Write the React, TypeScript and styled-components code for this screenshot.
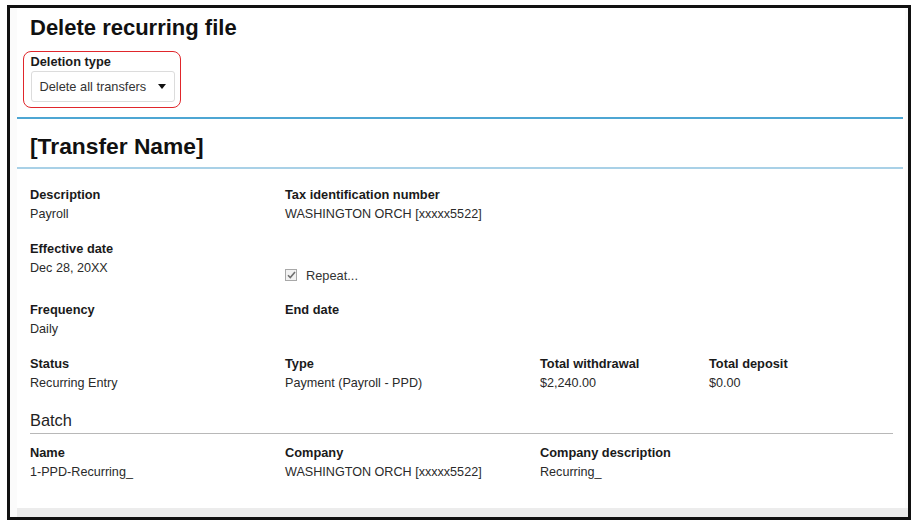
import React from 'react';
import styled, { createGlobalStyle } from 'styled-components';

const GlobalStyle = createGlobalStyle`
  html, body {
    margin: 0;
    padding: 0;
    background: #ffffff;
  }
  body {
    font-family: "Liberation Sans", Arial, sans-serif;
    color: #222222;
  }
`;

const Frame = styled.div`
  box-sizing: border-box;
  width: 904px;
  height: 515px;
  margin: 5px 0 0 7px;
  border: 3px solid #111111;
  background: #fbfbfb;
  display: flex;
  flex-direction: column;
`;

const Panel = styled.div`
  flex: 1;
  margin: 0 3px 0 7px;
  background: #ffffff;
  display: flex;
  flex-direction: column;
`;

const Footer = styled.div`
  height: 9px;
  margin-left: 7px;
  background: #ececec;
`;

const Header = styled.div`
  padding: 7px 0 9px 13px;
`;

const Title = styled.h1<{ $size?: number }>`
  margin: 0;
  font-size: ${(p) => p.$size ?? 22}px;
  line-height: 26px;
  font-weight: 700;
  color: #111111;
`;

const Highlight = styled.div`
  box-sizing: border-box;
  width: 158px;
  margin: 10px 0 0 -7px;
  padding: 1.5px 5px 5px 6.5px;
  border: 1.5px solid #e0262b;
  border-radius: 8px;
`;

const FieldLabel = styled.div`
  font-size: 12.8px;
  line-height: 15px;
  font-weight: 700;
  color: #1a1a1a;
`;

const SelectBox = styled.div`
  box-sizing: border-box;
  width: 144px;
  height: 31px;
  margin-top: 2.5px;
  padding: 0 8px;
  border: 1px solid #dcdcdc;
  border-radius: 3px;
  background: #ffffff;
  display: flex;
  align-items: center;
  justify-content: space-between;
  font-size: 12.8px;
  color: #333333;
`;

const Caret = styled.span`
  width: 0;
  height: 0;
  border-left: 4px solid transparent;
  border-right: 4px solid transparent;
  border-top: 5px solid #111111;
`;

const Rule = styled.div<{ $color: string; $weight: number }>`
  height: ${(p) => p.$weight}px;
  margin-right: 2px;
  background: ${(p) => p.$color};
`;

const NameHeader = styled.div`
  box-sizing: border-box;
  height: 48px;
  padding: 7px 0 0 13px;
  display: flex;
  align-items: center;
`;

const Details = styled.div`
  padding: 18px 12px 0 13px;
`;

const Grid = styled.div`
  display: grid;
  grid-template-columns: 255px 255px 169px 1fr;
  row-gap: 19px;
`;

const Field = styled.div`
  display: flex;
  flex-direction: column;
  gap: 5px;
`;

const Value = styled.div`
  font-size: 12.6px;
  line-height: 15px;
  color: #2a2a2a;
`;

const Spacer = styled.div`
  height: 15px;
`;

const CheckRow = styled.div`
  display: flex;
  align-items: center;
  gap: 9px;
  margin-top: 7px;
  font-size: 12.8px;
  line-height: 15px;
  color: #333333;
`;

const CheckBox = styled.span`
  box-sizing: border-box;
  width: 12px;
  height: 12px;
  border: 1px solid #a8a8a8;
  background: #f2f2f2;
  display: inline-flex;
  align-items: center;
  justify-content: center;
`;

const SectionTitle = styled.div`
  margin-top: 19px;
  padding-bottom: 3px;
  border-bottom: 1px solid #b8b8b8;
  font-size: 16.4px;
  line-height: 20px;
  color: #222222;
`;

const BatchGrid = styled(Grid)`
  margin-top: 11px;
`;

type Item = { label: string; value?: string };

const FieldCell: React.FC<Item> = ({ label, value }) => (
  <Field>
    <FieldLabel>{label}</FieldLabel>
    {value !== undefined && <Value>{value}</Value>}
  </Field>
);

export default function App() {
  return (
    <>
      <GlobalStyle />
      <Frame>
        <Panel>
          <Header>
            <Title>Delete recurring file</Title>
            <Highlight>
              <FieldLabel>Deletion type</FieldLabel>
              <SelectBox>
                <span>Delete all transfers</span>
                <Caret />
              </SelectBox>
            </Highlight>
          </Header>
          <Rule $color="#4ea6d3" $weight={1.5} />
          <NameHeader>
            <Title $size={22.8}>[Transfer Name]</Title>
          </NameHeader>
          <Rule $color="#a9d1e7" $weight={2} />
          <Details>
            <Grid>
              <FieldCell label="Description" value="Payroll" />
              <FieldCell label="Tax identification number" value="WASHINGTON ORCH [xxxxx5522]" />
              <div />
              <div />

              <FieldCell label="Effective date" value="Dec 28, 20XX" />
              <Field>
                <Spacer />
                <CheckRow>
                  <CheckBox>
                    <svg width="9" height="8" viewBox="0 0 9 8" aria-hidden="true">
                      <path d="M1 4.2l2.3 2.3L8 1" fill="none" stroke="#6f6f6f" strokeWidth="1.6" />
                    </svg>
                  </CheckBox>
                  Repeat...
                </CheckRow>
              </Field>
              <div />
              <div />

              <FieldCell label="Frequency" value="Daily" />
              <FieldCell label="End date" />
              <div />
              <div />

              <FieldCell label="Status" value="Recurring Entry" />
              <FieldCell label="Type" value="Payment (Payroll - PPD)" />
              <FieldCell label="Total withdrawal" value="$2,240.00" />
              <FieldCell label="Total deposit" value="$0.00" />
            </Grid>
            <SectionTitle>Batch</SectionTitle>
            <BatchGrid>
              <FieldCell label="Name" value="1-PPD-Recurring_" />
              <FieldCell label="Company" value="WASHINGTON ORCH [xxxxx5522]" />
              <FieldCell label="Company description" value="Recurring_" />
              <div />
            </BatchGrid>
          </Details>
        </Panel>
        <Footer />
      </Frame>
    </>
  );
}
